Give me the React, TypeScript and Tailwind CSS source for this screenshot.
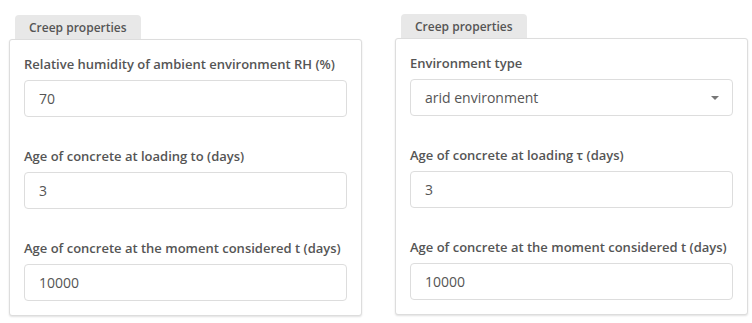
const font = { fontFamily: '"Open Sans", "Liberation Sans", sans-serif' };

type Field = { label: string; value: string; select?: boolean };

function Panel({ fields, className }: { fields: Field[]; className: string }) {
  return (
    <div className={className}>
      <div className="ml-[6px] inline-block rounded-t-[4px] bg-[#e8e8e8] px-[14px] pt-[4px] pb-[2px] text-[12px] leading-[18px] font-semibold text-[#555]">
        Creep properties
      </div>
      <div className="rounded-[3px] border border-[#ddd] bg-white px-[14px] pt-[14px] pb-[14px] shadow-[0_1px_2px_rgba(0,0,0,0.12)]">
        <div className="flex flex-col gap-[29px]">
          {fields.map((f) => (
            <div key={f.label}>
              <div className="mb-[6px] text-[13px] leading-[20px] font-semibold text-[#555]">{f.label}</div>
              <div className="flex h-[37px] items-center rounded-[4px] border border-[#ddd] bg-white px-[14px] text-[14px] text-[#555]">
                <span className="flex-1">{f.value}</span>
                {f.select && (
                  <span className="mr-[-1px] h-0 w-0 border-x-[4px] border-t-[4px] border-x-transparent border-t-[#777]" />
                )}
              </div>
            </div>
          ))}
        </div>
      </div>
    </div>
  );
}

export default function App() {
  const left: Field[] = [
    { label: "Relative humidity of ambient environment RH (%)", value: "70" },
    { label: "Age of concrete at loading to (days)", value: "3" },
    { label: "Age of concrete at the moment considered t (days)", value: "10000" },
  ];
  const right: Field[] = [
    { label: "Environment type", value: "arid environment", select: true },
    { label: "Age of concrete at loading τ (days)", value: "3" },
    { label: "Age of concrete at the moment considered t (days)", value: "10000" },
  ];
  return (
    <div className="flex h-[323px] w-[752px] items-start gap-[33px] bg-white pl-[9px]" style={font}>
      <Panel fields={left} className="w-[353px] pt-[14px]" />
      <Panel fields={right} className="w-[353px] pt-[13px]" />
    </div>
  );
}
